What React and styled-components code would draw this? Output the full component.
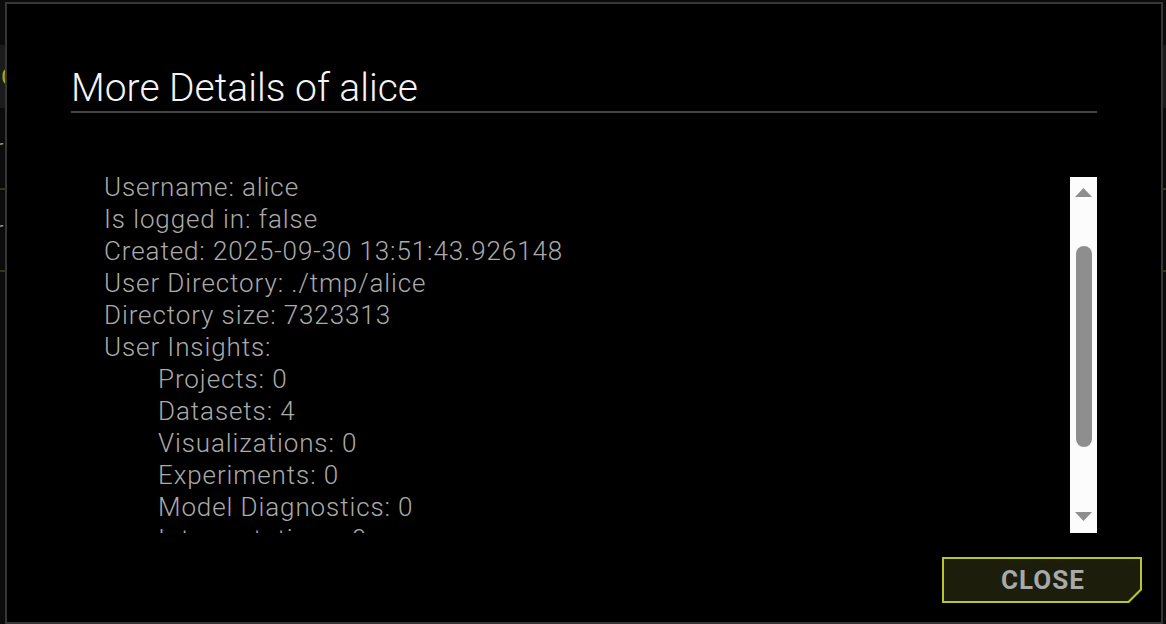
import React from 'react';
import styled, { createGlobalStyle } from 'styled-components';

const Global = createGlobalStyle`
  html, body { margin: 0; padding: 0; background: #0b0b0b; overflow: hidden; }
  body { font-family: Roboto, "Noto Sans", "Liberation Sans", sans-serif; }
  * { box-sizing: border-box; }
`;

const Page = styled.div`
  position: relative;
  width: 1166px;
  height: 624px;
  overflow: hidden;
  background: #0b0b0b;
  padding-top: 45px;
`;

const Table = styled.div`
  margin-left: -60px;
  width: 1300px;
`;

const HeadRow = styled.div`
  height: 63px;
  background: #1b1b1b;
  display: flex;
  align-items: center;
  padding-left: 61px;
  color: #a9a41e;
  font-size: 24px;
  font-weight: 400;
`;

const Row = styled.div`
  height: 82px;
  border-bottom: 2px solid #34340f;
  display: flex;
  align-items: center;
  padding-left: 11px;
  color: #9a9a9a;
  font-size: 26px;
  font-weight: 300;
`;

const Modal = styled.div`
  position: absolute;
  left: 5px;
  top: 2px;
  width: 1158px;
  height: 622px;
  border: 2px solid #363636;
  background: #000;
  display: flex;
  flex-direction: column;
`;

const Header = styled.div`
  margin: 0 64px;
  padding-top: 65px;
  padding-bottom: 3px;
  border-bottom: 2px solid #444;
`;

const Title = styled.h1`
  margin: 0;
  font-size: 39px;
  line-height: 39px;
  font-weight: 300;
  letter-spacing: 0;
  color: #f4f4f4;
`;

const Body = styled.div`
  margin: 58px 64px 0;
  height: 362px;
  display: flex;
  align-items: flex-start;
`;

const List = styled.div`
  flex: 1;
  height: 362px;
  overflow: hidden;
  padding-left: 33px;
`;

const Line = styled.div`
  font-size: 26px;
  line-height: 32px;
  font-weight: 300;
  letter-spacing: 0.9px;
  color: #aaaaaa;
  white-space: nowrap;
  padding-left: ${p => (p.$indent ? '54px' : '0')};
`;

const Scrollbar = styled.div`
  width: 27px;
  height: 356px;
  margin-top: 6px;
  background: #fcfcfc;
  display: flex;
  flex-direction: column;
  align-items: center;
`;

const Arrow = styled.svg`
  display: block;
  width: 17px;
  height: 9px;
  margin-top: ${p => p.$top}px;
  fill: #8e8e8e;
`;

const Thumb = styled.div`
  width: 16px;
  height: 201px;
  margin-top: 49px;
  border-radius: 8px;
  background: #8e8e8e;
`;

const Footer = styled.div`
  margin-top: 24px;
  display: flex;
  justify-content: flex-end;
  padding-right: 19px;
`;

const cut = (n) => `polygon(0 0, 100% 0, 100% calc(100% - ${n}px), calc(100% - ${n}px) 100%, 0 100%)`;

const CloseOuter = styled.button`
  width: 200px;
  height: 46px;
  padding: 2px;
  border: 0;
  background: #bac42c;
  clip-path: ${cut(13)};
  cursor: pointer;
`;

const CloseInner = styled.span`
  display: flex;
  align-items: center;
  justify-content: center;
  width: 100%;
  height: 100%;
  background: #1c1d0a;
  clip-path: ${cut(12)};
  color: #a9a9a9;
  font-family: Roboto, "Liberation Sans", sans-serif;
  font-weight: 700;
  font-size: 26px;
  letter-spacing: 1px;
  padding-left: 2px;
`;

const items = [
  ['Username: alice'],
  ['Is logged in: false'],
  ['Created: 2025-09-30 13:51:43.926148'],
  ['User Directory: ./tmp/alice'],
  ['Directory size: 7323313'],
  ['User Insights:'],
  ['Projects: 0', true],
  ['Datasets: 4', true],
  ['Visualizations: 0', true],
  ['Experiments: 0', true],
  ['Model Diagnostics: 0', true],
  ['Interpretations: 0', true],
  ['Deployments: 0', true],
];

export default function App() {
  return (
    <>
      <Global />
      <Page>
        <Table>
          <HeadRow>Co</HeadRow>
          <Row>User</Row>
          <Row>User</Row>
        </Table>
        <Modal>
          <Header>
            <Title>More Details of alice</Title>
          </Header>
          <Body>
            <List>
              {items.map(([t, indent]) => (
                <Line key={t} $indent={indent}>{t}</Line>
              ))}
            </List>
            <Scrollbar>
              <Arrow $top={11} viewBox="0 0 17 9"><polygon points="8.5,0 17,9 0,9" /></Arrow>
              <Thumb />
              <Arrow $top={65} viewBox="0 0 17 9"><polygon points="0,0 17,0 8.5,9" /></Arrow>
            </Scrollbar>
          </Body>
          <Footer>
            <CloseOuter>
              <CloseInner>CLOSE</CloseInner>
            </CloseOuter>
          </Footer>
        </Modal>
      </Page>
    </>
  );
}
